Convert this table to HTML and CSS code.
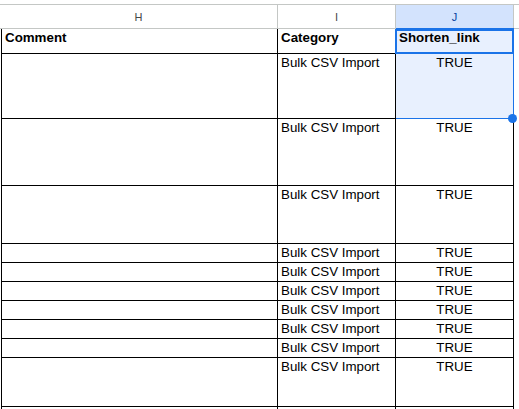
FILE: index.html
```html
<!DOCTYPE html>
<html>
<head>
<meta charset="utf-8">
<link rel="stylesheet" href="styles.css">
</head>
<body>
<div class="sheet">
  <div class="col-headers">
    <div class="ch ch-h">H</div>
    <div class="ch ch-i">I</div>
    <div class="ch ch-j sel">J</div>
    <div class="ch-rest"></div>
  </div>
  <div class="grid-wrap">
    <div class="grid">
      <div class="c b">Comment</div><div class="c b">Category</div><div class="c b fill">Shorten_link</div>
      <div class="c"></div><div class="c">Bulk CSV Import</div><div class="c ctr fill">TRUE</div>
      <div class="c"></div><div class="c">Bulk CSV Import</div><div class="c ctr">TRUE</div>
      <div class="c"></div><div class="c">Bulk CSV Import</div><div class="c ctr">TRUE</div>
      <div class="c"></div><div class="c">Bulk CSV Import</div><div class="c ctr">TRUE</div>
      <div class="c"></div><div class="c">Bulk CSV Import</div><div class="c ctr">TRUE</div>
      <div class="c"></div><div class="c">Bulk CSV Import</div><div class="c ctr">TRUE</div>
      <div class="c"></div><div class="c">Bulk CSV Import</div><div class="c ctr">TRUE</div>
      <div class="c"></div><div class="c">Bulk CSV Import</div><div class="c ctr">TRUE</div>
      <div class="c"></div><div class="c">Bulk CSV Import</div><div class="c ctr">TRUE</div>
      <div class="c"></div><div class="c">Bulk CSV Import</div><div class="c ctr">TRUE</div>
      <div class="c"></div><div class="c"></div><div class="c"></div>
    </div>
    <div class="range"></div>
    <div class="active"></div>
    <div class="handle"></div>
  </div>
</div>
</body>
</html>
```
FILE: styles.css
```css
html, body {
  margin: 0;
  padding: 0;
  background: #fff;
  overflow: hidden;
}
.sheet {
  width: 519px;
  height: 409px;
  overflow: hidden;
  font-family: "Liberation Sans", Arial, sans-serif;
}
.col-headers {
  display: flex;
  margin-top: 4px;
  border-top: 1px solid #c4c7c5;
  border-bottom: 1px solid #c4c7c5;
  height: 23px;
}
.ch {
  display: flex;
  align-items: center;
  justify-content: center;
  border-right: 1px solid #c4c7c5;
  font-size: 11px;
  color: #444746;
}
.ch-h { width: 277px; }
.ch-i { width: 117px; }
.ch-j { width: 117px; }
.ch.sel {
  background: #d3e3fd;
  color: #0842a0;
}
.ch-rest { flex: 1; }
.grid-wrap {
  position: relative;
  margin-left: 1px;
  width: 513px;
}
.grid {
  display: grid;
  grid-template-columns: 275px 117px 117px;
  grid-template-rows: 24px 64px 66px 57px 18px 18px 18px 18px 18px 18px 48px 20px;
  gap: 1px;
  padding: 0 1px 1px 1px;
  background: #000;
}
.c {
  background: #fff;
  font-size: 13.333px;
  line-height: 15px;
  padding: 1px 3px 0 3px;
  color: #000;
  white-space: nowrap;
  overflow: hidden;
}
.c.b { font-weight: bold; }
.c.ctr { text-align: center; }
.c.fill { background: #e8f0fe; }
.range {
  position: absolute;
  left: 395px;
  top: -1px;
  width: 118px;
  height: 91px;
  border-style: solid;
  border-color: #1a73e8;
  border-width: 1px 1px 1px 0;
  box-sizing: border-box;
}
.active {
  position: absolute;
  left: 394px;
  top: 0;
  width: 119px;
  height: 25px;
  border: 2px solid #1a73e8;
  box-sizing: border-box;
}
.handle {
  position: absolute;
  left: 507px;
  top: 85px;
  width: 9px;
  height: 9px;
  border-radius: 50%;
  background: #1a73e8;
}
```
